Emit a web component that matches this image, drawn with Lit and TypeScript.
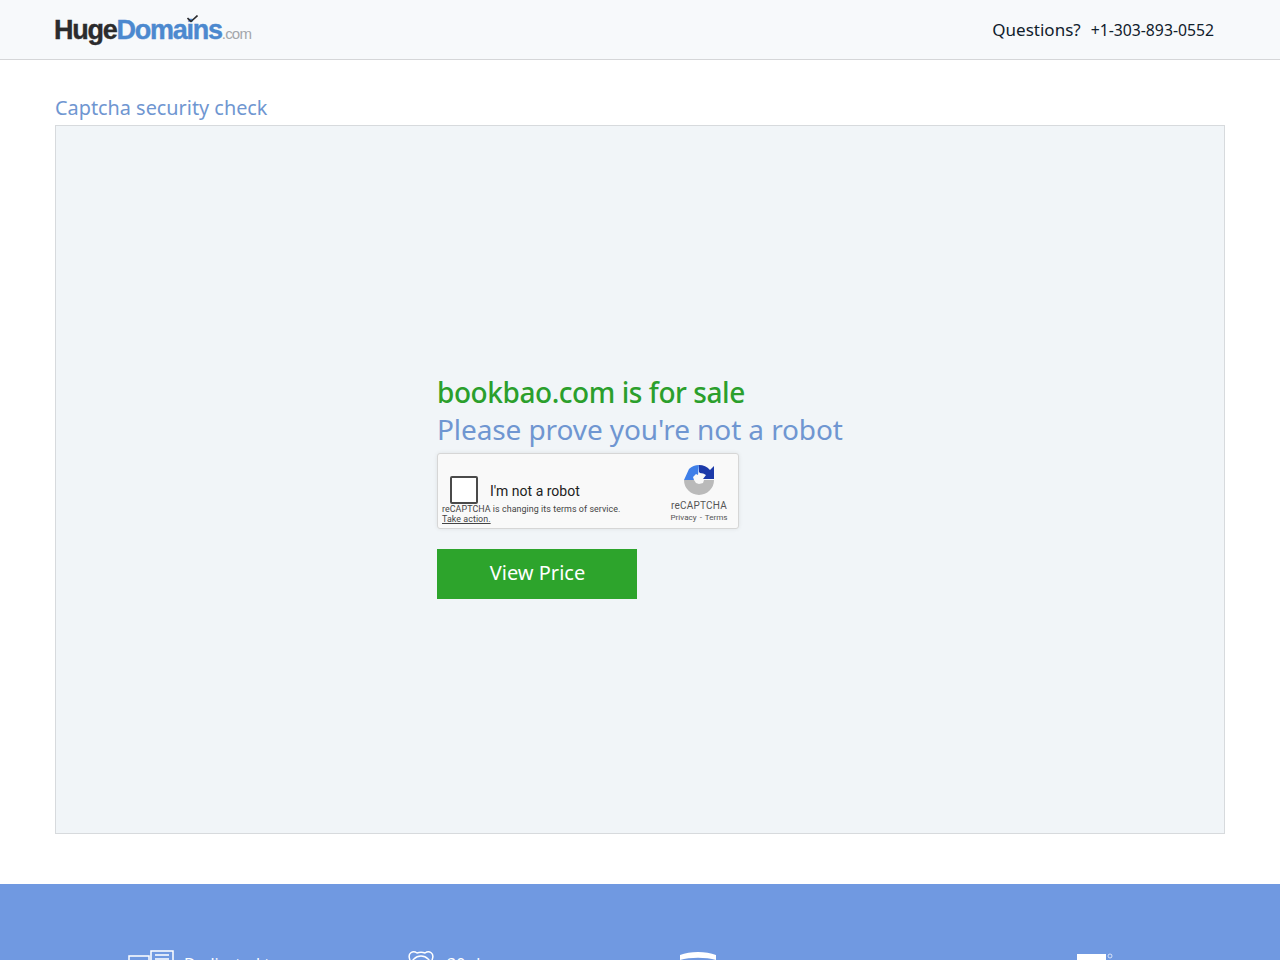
import { LitElement, html, css } from "lit";
import { customElement } from "lit/decorators.js";

@customElement("app-root")
export class AppRoot extends LitElement {
  static styles = css`
    :host { display: block; font-family: "Noto Sans", "Open Sans", sans-serif; background: #fff; height: 960px; overflow: hidden; }
    .header { height: 59px; background: #f7f9fb; border-bottom: 1px solid #d5d6d8; display: flex; justify-content: space-between; align-items: center; padding: 0 66px 0 54px; }
    .logo { position: relative; display: flex; align-items: baseline; font-family: "Liberation Sans", Arial, sans-serif; font-weight: 700; font-size: 27px; letter-spacing: -1.25px; line-height: 30px; margin-top: 5px; -webkit-text-stroke: 0.4px currentColor; }
    .huge { color: #2b2b2d; }
    .dom { color: #4c89cf; }
    .com { color: #a3a6aa; font-size: 15px; font-weight: 400; letter-spacing: -0.8px; margin-left: 0; -webkit-text-stroke: 0; }
    .tick { position: absolute; left: 133px; top: 0; }
    .contact { display: flex; gap: 10px; align-items: baseline; color: #10202b; margin-top: -1px; }
    .q { font-size: 17px; }
    .phone { font-size: 15.750px; }
    .main { padding: 33px 55px 50px; }
    .title { font-size: 19.850px; line-height: 30px; color: #6f96d1; margin-bottom: 2px; }
    .box { background: #f1f5f8; border: 1px solid #d7dadd; display: flex; flex-direction: column; align-items: flex-start; padding: 248px 0 0 381px; box-sizing: border-box; height: 709px; }
    h1, h2 { margin: 0; font-size: 28px; line-height: 37px; }
    h1 { color: #2b9f2c; font-weight: 500; letter-spacing: -0.44px; }
    h2 { color: #6f96d1; font-weight: 400; letter-spacing: -0.1px; }
    .captcha { margin-top: 5px; width: 302px; height: 76px; box-sizing: border-box; background: #f9f9f9; border: 1px solid #d6d6d6; border-radius: 3px; box-shadow: 0 0 4px rgba(0,0,0,.08); font-family: Roboto, sans-serif; display: flex; justify-content: space-between; color: #222; }
    .left { padding: 22px 0 0 4px; }
    .check-row { display: flex; align-items: center; gap: 12px; padding-left: 8px; height: 28px; }
    .check { width: 28px; height: 28px; box-sizing: border-box; background: #fff; border: 2px solid #4a4a4a; border-radius: 2px; }
    .label { font-size: 14px; margin-top: 2px; }
    .notice { font-size: 8.900px; letter-spacing: .07px; line-height: 10px; color: #444; }
    .notice u { display: block; }
    .right { width: 78px; display: flex; flex-direction: column; align-items: center; padding-top: 10px; }
    .rc { font-size: 10px; line-height: 12px; color: #555; margin-top: 4px; letter-spacing: .2px; }
    .terms { font-size: 8.100px; line-height: 10px; color: #555; word-spacing: 1px; }
    .btn { margin-top: 20px; width: 200px; height: 50px; border: 0; background: #2da42c; color: #fff; font: 400 20px "Noto Sans", sans-serif; padding: 0 0 3px 1px; }
    .footer { height: 220px; background: #7099e1; color: #fff; display: grid; grid-template-columns: 279px 272px 398px 1fr; padding: 66px 0 0 128px; font-size: 16px; }
    .feat { display: flex; gap: 10px; align-items: flex-start; }
    .feat span { line-height: 20px; margin-top: 4px; }
    .wide-gap { gap: 12px; }
  `;

  render() {
    return html`
      <div class="header">
        <div class="logo">
          <span class="huge">Huge</span><span class="dom">Domains</span><span class="com">.com</span>
          <svg class="tick" width="11" height="8" viewBox="0 0 11 8"><path d="M.5 3l3.500 3.500L10.500.5" fill="none" stroke="#2b2b2d" stroke-width="1.600"/></svg>
        </div>
        <div class="contact"><span class="q">Questions?</span><span class="phone">+1-303-893-0552</span></div>
      </div>
      <div class="main">
        <div class="title">Captcha security check</div>
        <div class="box">
          <h1>bookbao.com is for sale</h1>
          <h2>Please prove you're not a robot</h2>
          <div class="captcha">
            <div class="left">
              <div class="check-row"><div class="check"></div><div class="label">I'm not a robot</div></div>
              <div class="notice">reCAPTCHA is changing its terms of service.<u>Take action.</u></div>
            </div>
            <div class="right">
              <svg width="32" height="32" viewBox="0 0 32 32">
                <path d="M1 16h10l-1-3 3-3 2 1 1-10A15 15 0 0 0 6 5z" fill="#3f7fe8"/>
                <path d="M16 1a15 15 0 0 1 11 5l4-4v13H20l3-4a10 10 0 0 0-6-2l-1-1z" fill="#1c3aa9"/>
                <path d="M1 16h10l2 3 3 1 4-1 1-3h10a15 15 0 0 1-30 0z" fill="#bababa"/>
              </svg>
              <div class="rc">reCAPTCHA</div>
              <div class="terms">Privacy - Terms</div>
            </div>
          </div>
          <button class="btn">View Price</button>
        </div>
      </div>
      <div class="footer">
        <div class="feat">
          <svg width="46" height="40" viewBox="0 0 46 40" fill="none" stroke="#fff" stroke-width="1.500"><path d="M1 6h20v24H1zM23 1h22v24H23z"/><path d="M27 5h14M27 9h14"/></svg>
          <span>Dedicated to</span>
        </div>
        <div class="feat wide-gap">
          <svg width="28" height="40" viewBox="0 0 28 40" fill="none" stroke="#fff" stroke-width="1.500"><path d="M3 10C0 3 6 0 10 3c3-1 5-1 8 0 4-3 10 0 7 7"/><circle cx="14" cy="16" r="10"/></svg>
          <span>30-day</span>
        </div>
        <div class="feat">
          <svg width="38" height="40" viewBox="0 0 38 40" fill="#fff"><path d="M1 10V5c10-4 26-4 36 0v5c-10-3-26-3-36 0z"/></svg>
        </div>
        <div class="feat">
          <svg width="38" height="40" viewBox="0 0 38 40"><rect x="0" y="4" width="29" height="30" fill="#fff"/><circle cx="33" cy="6" r="2" fill="none" stroke="#fff" stroke-width=".7"/></svg>
        </div>
      </div>
    `;
  }
}
